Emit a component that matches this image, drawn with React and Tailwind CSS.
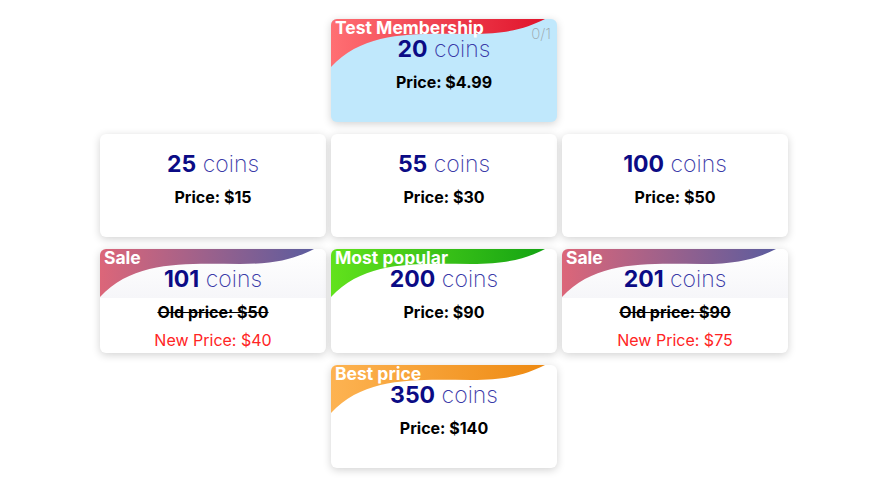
import React from "react";

const font = { fontFamily: "Inter, 'Noto Sans', sans-serif" };

const ribbons = {
    red: ["#ff6f73", "#e0142c"],
    sale: ["#dc6679", "#5b5c9e"],
    green: ["#62e21c", "#14a313"],
    orange: ["#fdb352", "#ee8a12"],
};

function Ribbon({ id, label, tone, tint }) {
    const [a, b] = ribbons[tone];
    return (
        <div className={"absolute left-0 top-0 w-full h-[49px] " + (tint ? "bg-gradient-to-b from-white to-[#f6f6f9]" : "")}>
            <svg width="226" height="49" viewBox="0 0 226 49" className="absolute left-0 top-0">
                <defs>
                    <linearGradient id={id} x1="0" y1="0" x2="1" y2="0">
                        <stop offset="0" stopColor={a} />
                        <stop offset="1" stopColor={b} />
                    </linearGradient>
                </defs>
                <path d="M0 0 H214 C196 9 178 15 140 15 C90 15 35 10 0 48 Z" fill={`url(#${id})`} />
            </svg>
            <span className="absolute left-[4px] top-[0px] text-[17.5px] font-bold text-white leading-none">{label}</span>
        </div>
    );
}

function Card({ coins, price, oldPrice, ribbon, blue, counter, tall }) {
    return (
        <div
            className={
                "relative w-[226px] rounded-[6px] overflow-hidden shadow-[0_2px_8px_rgba(0,0,0,0.18)] " +
                (blue ? "bg-[#c0e8fc] " : "bg-white ") +
                (tall ? "h-[104px]" : "h-[103px]")
            }
        >
            {ribbon && <Ribbon {...ribbon} />}
            {counter && (
                <span className="absolute right-[6px] top-[4px] text-[15px] font-extralight text-[#9aa4aa]">{counter}</span>
            )}
            <div className="relative flex flex-col items-center pt-[18px]">
                <div className="text-[23px] leading-[24px] text-[#3a3aa8]">
                    <span className="font-bold text-[#0b0b85]">{coins}</span>{" "}
                    <span className="font-extralight">coins</span>
                </div>
                {oldPrice ? (
                    <>
                        <div className="mt-[6px] text-[16px] leading-[30px] font-bold text-black line-through">
                            Old price: ${oldPrice}
                        </div>
                        <div className="text-[16px] leading-[26px] text-[#ff2424]">New Price: ${price}</div>
                    </>
                ) : (
                    <div className="mt-[6px] text-[16px] leading-[30px] font-bold text-black">Price: ${price}</div>
                )}
            </div>
        </div>
    );
}

export default function App() {
    return (
        <div className="min-h-screen bg-white pt-[19px]" style={font}>
            <div className="w-[688px] ml-[100px] flex flex-col gap-[12px]">
                <div className="flex justify-center gap-[5px]">
                    <Card coins="20" price="4.99" blue counter="0/1" ribbon={{ id: "g1", label: "Test Membership", tone: "red" }} />
                </div>
                <div className="flex justify-center gap-[5px]">
                    <Card coins="25" price="15" />
                    <Card coins="55" price="30" />
                    <Card coins="100" price="50" />
                </div>
                <div className="flex justify-center gap-[5px]">
                    <Card coins="101" oldPrice="50" price="40" tall ribbon={{ id: "g2", label: "Sale", tone: "sale", tint: true }} />
                    <Card coins="200" price="90" tall ribbon={{ id: "g3", label: "Most popular", tone: "green" }} />
                    <Card coins="201" oldPrice="90" price="75" tall ribbon={{ id: "g4", label: "Sale", tone: "sale", tint: true }} />
                </div>
                <div className="flex justify-center gap-[5px]">
                    <Card coins="350" price="140" ribbon={{ id: "g5", label: "Best price", tone: "orange" }} />
                </div>
            </div>
        </div>
    );
}
